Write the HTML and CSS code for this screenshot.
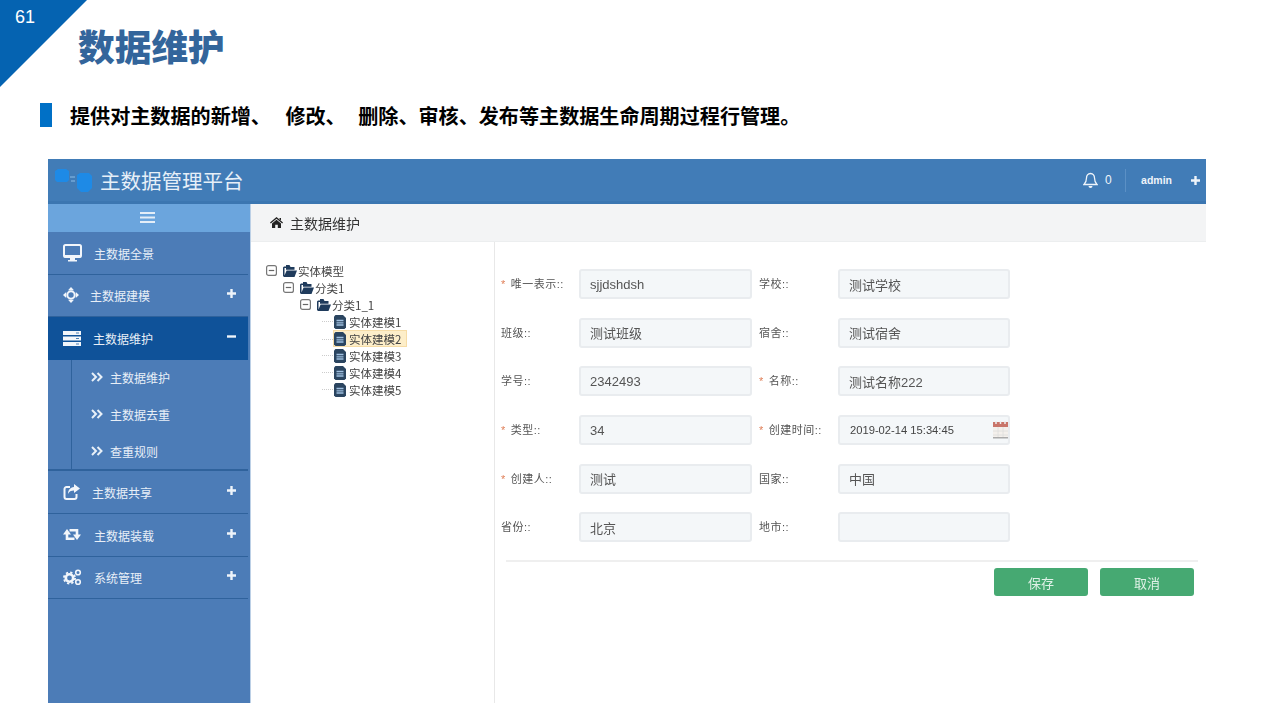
FILE: index.html
```html
<!DOCTYPE html>
<html lang="zh-CN">
<head>
    <meta charset="UTF-8">
    <meta name="viewport" content="width=device-width, initial-scale=1.0">
    <title>数据维护</title>
    <link rel="stylesheet" href="styles.css">
</head>
<body>
    <svg class="defs" width="0" height="0">
        <symbol id="i-folder" viewBox="0 0 14 12"><path d="M0 2.500V11l1 1h10.500l2.500-6.500H3.600L1.500 10.500V3h4L5 1.500H1z" fill="#1f3b5c"/><path d="M3 0h3.500l1 2h4v2.800H3z" fill="#1f3b5c"/></symbol>
        <symbol id="i-file" viewBox="0 0 12 14"><path d="M0 1.500 1.500 0H9l3 3v9.500L10.500 14h-9L0 12.500z" fill="#2b4560"/><path d="M2.500 5.500h7M2.500 7.800h7M2.500 10h7" stroke="#9fc0e0" stroke-width="1.300"/></symbol>
        <symbol id="i-minus-box" viewBox="0 0 11 11"><rect x=".6" y=".6" width="9.800" height="9.800" rx="2" fill="#fff" stroke="#777" stroke-width="1.200"/><path d="M2.800 5.500h5.400" stroke="#666" stroke-width="1.200"/></symbol>
        <symbol id="i-chevrons" viewBox="0 0 12 10"><path d="M1 1l4 4-4 4M6.500 1l4 4-4 4" fill="none" stroke="#e8f0f8" stroke-width="2"/></symbol>
        <symbol id="i-plus" viewBox="0 0 9 9"><path d="M4.500 0v9M0 4.500h9" stroke="#eef4fa" stroke-width="2.400"/></symbol>
    </svg>

    <div class="corner"><span class="page-no">61</span></div>

    <header class="slide-head">
        <h1 class="slide-title">数据维护</h1>
        <p class="slide-sub">提供对主数据的新增、<span class="gap"></span>修改、<span class="gap gap-b"></span>删除、审核、发布等主数据生命周期过程行管理。</p>
    </header>

    <div class="app">
        <div class="topbar">
            <svg class="logo" width="38" height="25" viewBox="0 0 38 25">
                <path d="M1 3 4 1h8l3 2v9l-2 2H3l-2-2z" fill="#1e8ae6"/>
                <path d="M23 7l3-2h9l3 3v12l-4 4h-7l-4-4z" fill="#1e8ae6"/>
                <path d="M16 9h5M17 13h4" stroke="#8cbde8" stroke-width="1"/>
            </svg>
            <span class="brand">主数据管理平台</span>
            <div class="top-right">
                <svg class="bell" width="15" height="17" viewBox="0 0 15 17">
                    <path d="M7.500 1.500C4.800 1.500 3.500 3.500 3.500 6c0 3.500-1 5-2.500 6.500h13C12.500 11 11.500 9.500 11.500 6c0-2.500-1.300-4.500-4-4.500z" fill="none" stroke="#eef4fa" stroke-width="1.300"/>
                    <path d="M5.500 14a2 2 0 0 0 4 0z" fill="#eef4fa"/>
                </svg>
                <span class="count">0</span>
                <span class="divider"></span>
                <span class="user">admin</span>
                <svg class="user-plus" width="9" height="9"><use href="#i-plus"/></svg>
            </div>
        </div>

        <div class="main">
            <aside class="sidebar">
                <div class="toggle">
                    <svg width="15" height="13" viewBox="0 0 15 13"><path d="M0 2h15M0 6.500h15M0 11h15" stroke="#e4eef8" stroke-width="2.200"/></svg>
                </div>
                <ul class="menu">
                    <li class="item">
                        <svg class="icon" width="19" height="18" viewBox="0 0 19 18"><rect x="1" y="1" width="17" height="12" rx="1.500" fill="none" stroke="#f2f6fb" stroke-width="2"/><path d="M1 11h17v2.500H1z" fill="#f2f6fb"/><path d="M7 14h5v2h2v1.500H5V16h2z" fill="#f2f6fb"/></svg>
                        <span class="name name-a">主数据全景</span>
                    </li>
                    <li class="item">
                        <svg class="icon" width="16" height="16" viewBox="0 0 16 16"><path d="M8 0l3 3.200H5zM8 16l-3-3.200h6zM0 8l3.200-3v6zM16 8l-3.200 3V5z" fill="#f2f6fb"/><circle cx="8" cy="8" r="3.700" fill="none" stroke="#f2f6fb" stroke-width="2"/></svg>
                        <span class="name name-b">主数据建模</span>
                        <svg class="sign" width="9" height="9"><use href="#i-plus"/></svg>
                    </li>
                    <li class="item active">
                        <svg class="icon" width="18" height="15" viewBox="0 0 18 15"><path d="M0 0h18v4H0zM0 5.500h18v4H0zM0 11h18v4H0z" fill="#f2f6fb"/><path d="M13 2h3M13 7.500h3M13 13h3" stroke="#4a7fb5" stroke-width="1"/></svg>
                        <span class="name name-c">主数据维护</span>
                        <svg class="sign" width="9" height="9" viewBox="0 0 9 9"><path d="M0 4.500h9" stroke="#eef4fa" stroke-width="2.400"/></svg>
                    </li>
                    <li class="submenu">
                        <div class="sub-list">
                            <div class="sub-item"><svg width="12" height="10"><use href="#i-chevrons"/></svg><span>主数据维护</span></div>
                            <div class="sub-item"><svg width="12" height="10"><use href="#i-chevrons"/></svg><span>主数据去重</span></div>
                            <div class="sub-item"><svg width="12" height="10"><use href="#i-chevrons"/></svg><span>查重规则</span></div>
                        </div>
                    </li>
                    <li class="item">
                        <svg class="icon" width="17" height="16" viewBox="0 0 17 16"><path d="M7 3H3.500A2 2 0 0 0 1.500 5v8a2 2 0 0 0 2 2h8a2 2 0 0 0 2-2v-3" fill="none" stroke="#f2f6fb" stroke-width="2"/><path d="M11 0l6 4.500L11 9V6.500C8 6.500 6 7.500 5 10c0-4 2-6.500 6-7z" fill="#f2f6fb"/></svg>
                        <span class="name name-d">主数据共享</span>
                        <svg class="sign" width="9" height="9"><use href="#i-plus"/></svg>
                    </li>
                    <li class="item">
                        <svg class="icon" width="18" height="13" viewBox="0 0 18 13"><path d="M4 5v5.700h7.500M14 8V2.300H6.500" fill="none" stroke="#f2f6fb" stroke-width="2.600"/><path d="M0 6.500h8L4 1zM10 6.500h8L14 12z" fill="#f2f6fb"/></svg>
                        <span class="name name-e">主数据装载</span>
                        <svg class="sign" width="9" height="9"><use href="#i-plus"/></svg>
                    </li>
                    <li class="item">
                        <svg class="icon" width="19" height="17" viewBox="0 0 19 17">
                            <circle cx="6.500" cy="9" r="3.700" fill="none" stroke="#f2f6fb" stroke-width="2.600"/>
                            <circle cx="6.500" cy="9" r="5.600" fill="none" stroke="#f2f6fb" stroke-width="1.800" stroke-dasharray="2.300 2.100"/>
                            <circle cx="15" cy="3.500" r="2.300" fill="none" stroke="#f2f6fb" stroke-width="1.600"/>
                            <circle cx="15" cy="13" r="2.300" fill="none" stroke="#f2f6fb" stroke-width="1.600"/>
                        </svg>
                        <span class="name name-f">系统管理</span>
                        <svg class="sign" width="9" height="9"><use href="#i-plus"/></svg>
                    </li>
                </ul>
            </aside>

            <div class="content">
                <div class="crumb">
                    <svg width="13" height="11" viewBox="0 0 13 11"><path d="M6.500 0L13 5.600l-.8.900L6.500 1.700.8 6.500 0 5.600z" fill="#222"/><path d="M2 6.500l4.500-3.800L11 6.500V11H7.800V7.800H5.200V11H2zM9.500 1H11v2.500L9.500 2.200z" fill="#222"/></svg>
                    <span>主数据维护</span>
                </div>
                <div class="panels">
                    <div class="tree">
                        <div class="node"><svg class="exp" width="11" height="11"><use href="#i-minus-box"/></svg><svg class="folder" width="14" height="12"><use href="#i-folder"/></svg><span>实体模型</span></div>
                        <div class="branch">
                            <div class="node"><svg class="exp" width="11" height="11"><use href="#i-minus-box"/></svg><svg class="folder" width="14" height="12"><use href="#i-folder"/></svg><span>分类1</span></div>
                            <div class="branch">
                                <div class="node"><svg class="exp" width="11" height="11"><use href="#i-minus-box"/></svg><svg class="folder" width="14" height="12"><use href="#i-folder"/></svg><span>分类1_1</span></div>
                                <div class="leaves">
                                    <div class="leaf"><svg width="12" height="14"><use href="#i-file"/></svg><span>实体建模1</span></div>
                                    <div class="leaf selected"><svg width="12" height="14"><use href="#i-file"/></svg><span>实体建模2</span></div>
                                    <div class="leaf"><svg width="12" height="14"><use href="#i-file"/></svg><span>实体建模3</span></div>
                                    <div class="leaf"><svg width="12" height="14"><use href="#i-file"/></svg><span>实体建模4</span></div>
                                    <div class="leaf"><svg width="12" height="14"><use href="#i-file"/></svg><span>实体建模5</span></div>
                                </div>
                            </div>
                        </div>
                    </div>

                    <div class="form">
                        <div class="fields">
                            <label class="lbl"><i>*</i>唯一表示::</label>
                            <div class="field">sjjdshdsh</div>
                            <label class="lbl lbl-r">学校::</label>
                            <div class="field">测试学校</div>

                            <label class="lbl">班级::</label>
                            <div class="field">测试班级</div>
                            <label class="lbl lbl-r">宿舍::</label>
                            <div class="field">测试宿舍</div>

                            <label class="lbl">学号::</label>
                            <div class="field">2342493</div>
                            <label class="lbl lbl-r"><i>*</i>名称::</label>
                            <div class="field">测试名称222</div>

                            <label class="lbl"><i>*</i>类型::</label>
                            <div class="field">34</div>
                            <label class="lbl lbl-r"><i>*</i>创建时间::</label>
                            <div class="field date">2019-02-14 15:34:45
                                <svg class="cal" width="15" height="18" viewBox="0 0 15 18"><path d="M0 1h15v16H0z" fill="#f4f0ec"/><path d="M0 1h15v5H0z" fill="#c9756a"/><path d="M3 0v3M7.500 0v3M12 0v3" stroke="#eee" stroke-width="1.500"/><path d="M0 10h15M0 14h15M5 6v11M10 6v11" stroke="#ddd" stroke-width=".8"/><path d="M0 16h15v1.500H0z" fill="#aaa"/></svg>
                            </div>

                            <label class="lbl"><i>*</i>创建人::</label>
                            <div class="field">测试</div>
                            <label class="lbl lbl-r">国家::</label>
                            <div class="field">中国</div>

                            <label class="lbl">省份::</label>
                            <div class="field">北京</div>
                            <label class="lbl lbl-r">地市::</label>
                            <div class="field"></div>
                        </div>
                        <div class="actions">
                            <button class="btn">保存</button>
                            <button class="btn">取消</button>
                        </div>
                    </div>
                </div>
            </div>
        </div>
    </div>
</body>
</html>
```

FILE: styles.css
```css
* {
    box-sizing: border-box;
}
body {
    margin: 0;
    height: 720px;
    overflow: hidden;
    background: #fff;
    font-family: 'Liberation Sans', 'Noto Sans CJK SC', sans-serif;
}
ul {
    list-style: none;
    margin: 0;
    padding: 0;
}
.defs {
    position: absolute;
}

/* slide heading */
.corner {
    position: absolute;
    left: 0;
    top: 0;
    width: 87px;
    height: 87px;
    background: #0563b1;
    clip-path: polygon(0 0, 100% 0, 0 100%);
}
.page-no {
    position: absolute;
    left: 15px;
    top: 7px;
    font-family: 'Liberation Sans', sans-serif;
    font-size: 18px;
    color: #fff;
}
.slide-head {
    height: 159px;
    padding: 19px 0 0 40px;
}
.slide-title {
    margin: 0 0 0 38px;
    font-family: 'Noto Sans CJK SC', sans-serif;
    font-size: 36.700px;
    line-height: 52px;
    font-weight: 900;
    color: #33659b;
}
.slide-sub {
    margin: 32px 0 0;
    height: 24px;
    padding-left: 18px;
    border-left: 12px solid #0070c6;
    font-family: 'Noto Sans CJK SC', sans-serif;
    font-size: 20.100px;
    line-height: 26px;
    font-weight: 700;
    color: #000;
    white-space: nowrap;
}
.gap {
    display: inline-block;
    width: 14.500px;
}
.gap-b {
    width: 12.500px;
}

/* app screenshot */
.app {
    margin-left: 48px;
    width: 1158px;
    height: 544px;
    display: flex;
    flex-direction: column;
    filter: blur(0.4px);
}
.topbar {
    height: 45px;
    flex: none;
    display: flex;
    align-items: center;
    padding-left: 6px;
    background: #417cb7;
    border-bottom: 3px solid #3b76b1;
}
.logo {
    margin-right: 8px;
}
.brand {
    font-family: 'Noto Sans CJK SC', sans-serif;
    font-size: 20.500px;
    color: #e6eff8;
}
.top-right {
    margin-left: auto;
    display: flex;
    align-items: center;
    padding-right: 6px;
    color: #eef4fa;
}
.bell {
    margin-right: 7px;
}
.count {
    font-size: 12px;
    width: 14px;
}
.divider {
    width: 1px;
    height: 23px;
    margin: 0 15px 0 6px;
    background: #5b90c5;
}
.user {
    font-size: 10.500px;
    font-weight: 700;
    margin-right: 19px;
}
.main {
    flex: 1;
    display: flex;
    min-height: 0;
}

/* sidebar */
.sidebar {
    width: 203px;
    flex: none;
    background: #4c7cb7;
    border-right: 1px solid #bcd0e6;
}
.toggle {
    height: 28px;
    display: flex;
    justify-content: center;
    align-items: center;
    padding: 0 4px 2px 0;
    background: #6ba5dd;
}
.menu {
    margin-right: 2px;
}
.item {
    height: 42.500px;
    display: flex;
    align-items: center;
    padding: 0 12px 0 15px;
    border-bottom: 1px solid #2f629c;
    color: #e8eff7;
}
.item.active {
    background: #0f5299;
    border-bottom: 0;
}
.icon {
    flex: none;
}
.name {
    font-family: 'Noto Sans CJK SC', sans-serif;
    font-size: 12px;
    padding-top: 1px;
}
.name-a { margin-left: 12px; }
.name-b { margin-left: 11px; }
.name-c { margin-left: 12px; }
.name-d { margin-left: 12px; }
.name-e { margin-left: 13px; }
.name-f { margin-left: 12px; }
.sign {
    margin-left: auto;
    margin-bottom: 3px;
}
.submenu {
    height: 111px;
    margin-bottom: 1px;
    padding-left: 23px;
    border-bottom: 2px solid #2f629c;
}
.sub-list {
    height: 100%;
    border-left: 1px solid #2f629c;
}
.sub-item {
    height: 37px;
    display: flex;
    align-items: center;
    padding: 0 0 2px 19px;
    font-family: 'Noto Sans CJK SC', sans-serif;
    font-size: 12px;
    color: #e8eff7;
}
.sub-item span {
    margin-left: 7px;
}

/* content */
.content {
    flex: 1;
    min-width: 0;
    display: flex;
    flex-direction: column;
}
.crumb {
    height: 38px;
    flex: none;
    display: flex;
    align-items: center;
    gap: 7px;
    padding-left: 19px;
    background: #f3f4f5;
    border-bottom: 1px solid #eceeef;
    font-family: 'Noto Sans CJK SC', sans-serif;
    font-size: 14px;
    color: #333;
}
.panels {
    flex: 1;
    display: flex;
    min-height: 0;
}

/* tree */
.tree {
    width: 244px;
    flex: none;
    padding: 20px 0 0 15px;
    border-right: 1px solid #e8e8e8;
    font-family: 'Noto Sans CJK SC', sans-serif;
    font-size: 11.500px;
    color: #444;
}
.node,
.leaf {
    height: 17px;
    display: flex;
    align-items: center;
}
.exp {
    margin-right: 6px;
}
.folder {
    margin-right: 1px;
}
.branch {
    margin-left: 17px;
}
.leaves {
    margin-left: 34px;
}
.leaf {
    position: relative;
}
.leaf::before {
    content: "";
    position: absolute;
    left: -12px;
    top: 8px;
    width: 11px;
    border-top: 1px dotted #ccc;
}
.leaf svg {
    margin-right: 3px;
}
.leaf.selected {
    width: 74px;
    margin-left: -1px;
    background: #fdeec9;
    border: 1px solid #f6dca6;
}

/* form */
.form {
    flex: 1;
    min-width: 0;
    padding: 27px 8px 0 6px;
}
.fields {
    display: grid;
    grid-template-columns: 78px 173px 86px 172px;
    grid-auto-rows: 30px;
    row-gap: 18.700px;
    align-items: center;
}
.lbl {
    font-size: 11px;
    letter-spacing: 0.5px;
    color: #555;
    padding-bottom: 2px;
    white-space: nowrap;
}
.lbl i {
    font-style: normal;
    color: #e0805a;
    margin-right: 5px;
}
.lbl-r {
    padding-left: 7px;
}
.field {
    height: 30px;
    display: flex;
    align-items: center;
    padding: 0 9px;
    background: #f4f7f9;
    border: 2px solid #e9ecef;
    border-radius: 3px;
    font-size: 13px;
    color: #555;
}
.field.date {
    padding-left: 10px;
    padding-right: 0;
    font-size: 11.200px;
    color: #444;
    justify-content: space-between;
}
.cal {
    margin-top: -1px;
}
.actions {
    margin: 18px 0 0 5px;
    padding: 6px 4px 0 0;
    display: flex;
    justify-content: flex-end;
    gap: 12px;
    border-top: 2px solid #efefef;
}
.btn {
    width: 94px;
    height: 28px;
    padding: 0;
    border: none;
    border-radius: 3px;
    background: #46a972;
    font-family: 'Noto Sans CJK SC', sans-serif;
    font-size: 13px;
    color: #dff1e7;
}
```
